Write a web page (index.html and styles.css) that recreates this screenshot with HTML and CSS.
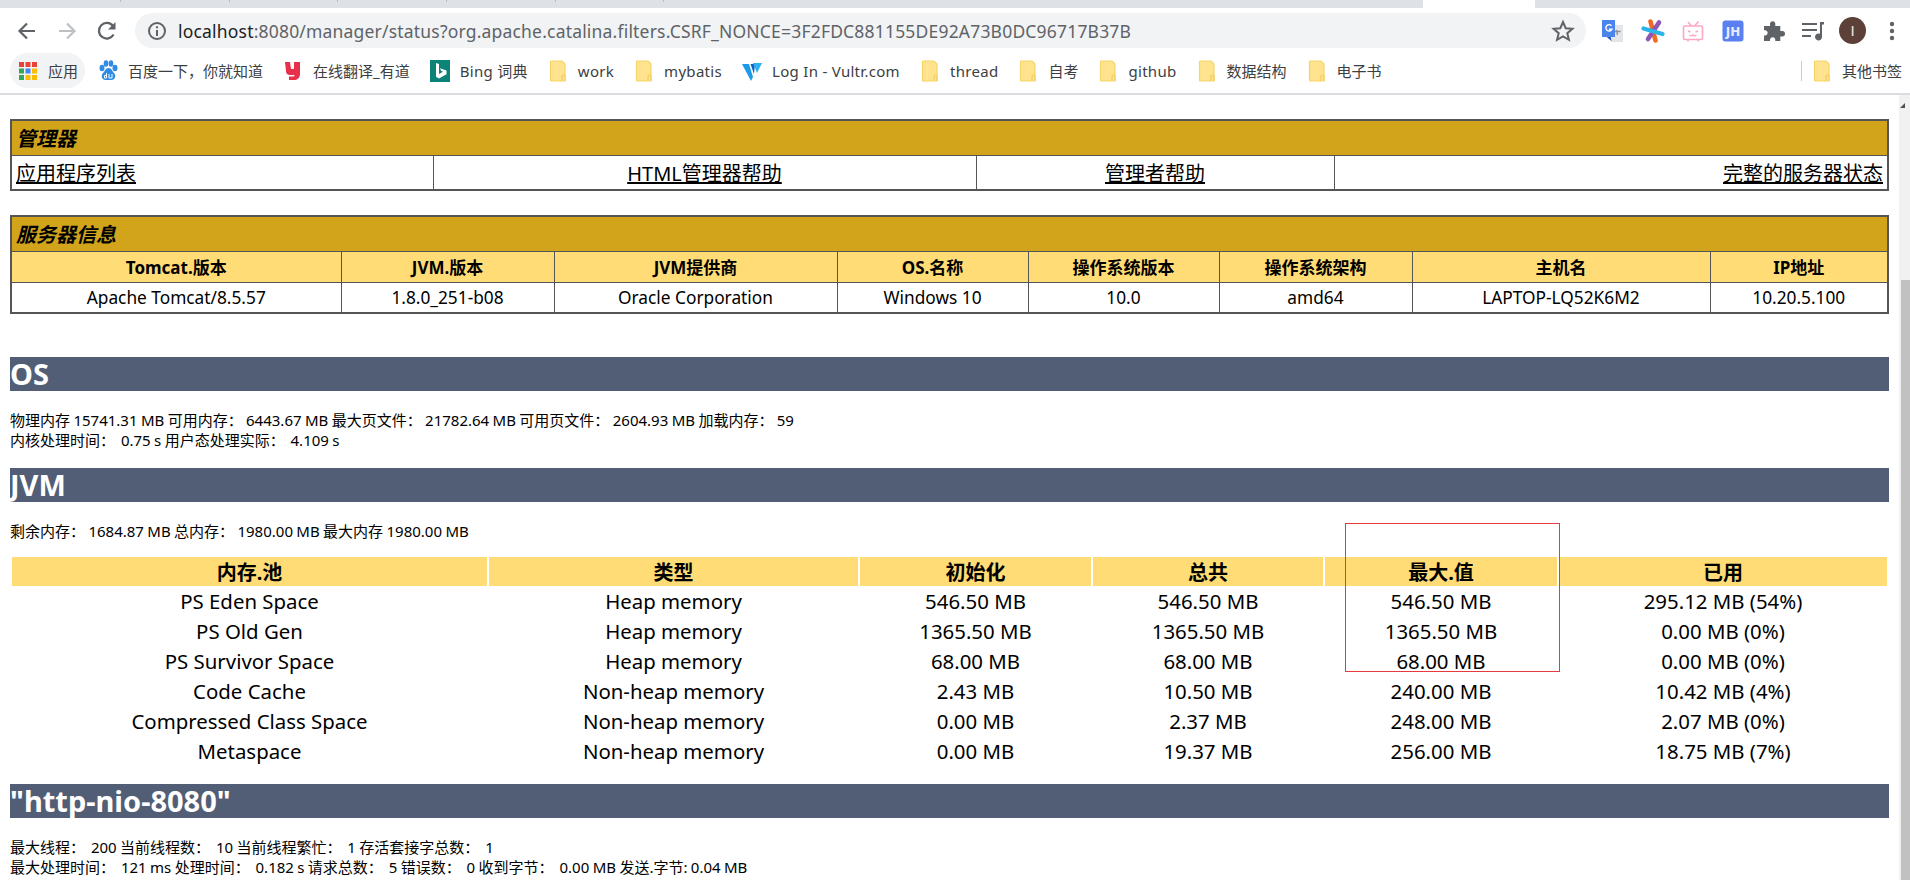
FILE: index.html
```html
<!DOCTYPE html>
<html lang="zh">
<head>
<meta charset="utf-8">
<title>/manager</title>
<link rel="stylesheet" href="styles.css">
</head>
<body>
<svg class="defs" width="0" height="0" aria-hidden="true">
  <symbol id="folder" viewBox="0 0 16 22">
    <path d="M1.500 1h10.500l3 3v17h-13.500a1 1 0 0 1-1-1v-18a1 1 0 0 1 1-1z" fill="#ffe38f" stroke="#f6d566" stroke-width="1.200"/>
    <path d="M12 21v-4.500a1.500 1.500 0 0 1 3 0v4.500" fill="#ffe38f" stroke="#f2cd5a" stroke-width="1.200"/>
  </symbol>
</svg>
<div class="tabstrip">
  <i class="tick t1"></i><i class="tick t2"></i><i class="tick t3"></i><i class="tick t4"></i><i class="tick t5"></i><i class="tick t6"></i>
  <div class="tab-active"></div>
</div>
<div class="toolbar">
  <svg class="tb" viewBox="0 0 24 24"><path d="M20 12H5M12 4.500 4.500 12l7.500 7.500" fill="none" stroke="#5f6368" stroke-width="2.200"/></svg>
  <svg class="tb" viewBox="0 0 24 24"><path d="M4 12h15M12 4.500l7.500 7.500-7.500 7.500" fill="none" stroke="#bdc1c6" stroke-width="2.200"/></svg>
  <svg class="tb" viewBox="0 0 24 24"><path d="M18.600 15.500a7.800 7.800 0 1 1-.6-8.500" fill="none" stroke="#5f6368" stroke-width="2.200"/><path d="M20.500 3v7.500H13z" fill="#5f6368"/></svg>
  <div class="omnibox">
    <svg class="info" viewBox="0 0 20 20"><circle cx="10" cy="10" r="8" fill="none" stroke="#5f6368" stroke-width="2"/><path d="M9 9h2v6H9zM9 5.200h2v2H9z" fill="#5f6368"/></svg>
    <span class="url"><span class="host">localhost</span>:8080/manager/status?org.apache.catalina.filters.CSRF_NONCE=3F2FDC881155DE92A73B0DC96717B37B</span>
    <svg class="star" viewBox="0 0 24 24"><path d="M12 3l2.700 6.200 6.700.6-5.100 4.400 1.600 6.600L12 17.300l-5.900 3.500 1.600-6.600-5.100-4.400 6.700-.6z" fill="none" stroke="#5f6368" stroke-width="2"/></svg>
  </div>
  <div class="exts">
    <svg class="tb" viewBox="0 0 24 24"><rect x="10" y="6" width="12" height="17" fill="#e3e5e7"/><path d="M15.500 11l1 5m-4-3.500h7" stroke="#8a8f94" stroke-width="1.300" fill="none"/><path d="M1 1h13v17H9.500l1 4-5-4H1z" fill="#4a85ec"/><path d="M9.500 18l1 4-4-4z" fill="#2c51b5"/><path d="M10.500 6.700A3.200 3.200 0 1 0 11 10.300H8" fill="none" stroke="#fff" stroke-width="1.400"/></svg>
    <svg class="tb" viewBox="0 0 24 24"><path d="M9.500 2.500 14.500 21.500" stroke="#f26a21" stroke-width="4.600" stroke-linecap="round"/><path d="M18 3.500 7 20" stroke="#8f56b5" stroke-width="4.600" stroke-linecap="round"/><path d="M2.500 9.500 21.500 15" stroke="#2ab4e8" stroke-width="4.200" stroke-linecap="round"/></svg>
    <svg class="tb" viewBox="0 0 24 24" fill="none" stroke="#fca8c4" stroke-width="1.600"><rect x="2.500" y="7" width="19" height="13.500" rx="1.500"/><path d="M10.500 7 7 3M13.500 7 17.500 2.500M7 20.500v2M17 20.500v2M7 12l2.500 1M17 12l-2.500 1M8.500 16c1.500 1.200 2.500 1 3.500 0 1 1 2 1.200 3.500 0"/></svg>
    <svg class="tb" viewBox="0 0 24 24"><rect x="1.500" y="1.500" width="21" height="21" rx="3" fill="#5b7ef0"/><text x="12" y="17" class="jh">JH</text></svg>
    <svg class="tb" viewBox="0 0 24 24"><path d="M9 4.500a2.700 2.700 0 0 1 5.300 0V7h5v5h2a2.700 2.700 0 0 1 0 5.400h-2V22h-5v-1.500a2.700 2.700 0 0 0-5.300 0V22H3v-5.500h1.500a2.700 2.700 0 0 0 0-5.300H3V7h6z" fill="#5f6368"/></svg>
    <svg class="tb" viewBox="0 0 24 24"><path d="M1 5h15M1 11h15M1 17h9" stroke="#5f6368" stroke-width="2" fill="none"/><path d="M19 3h4v2.500h-2V18a3.500 3.500 0 1 1-2-3.200z" fill="#5f6368"/></svg>
    <div class="avatar">I</div>
    <svg class="tb" viewBox="0 0 24 24"><circle cx="12" cy="5" r="2.200" fill="#5f6368"/><circle cx="12" cy="12" r="2.200" fill="#5f6368"/><circle cx="12" cy="19" r="2.200" fill="#5f6368"/></svg>
  </div>
</div>
<div class="bookmarks">
  <div class="bm chip">
    <svg class="ic" viewBox="0 0 20 20">
      <rect x="1" y="1" width="5" height="5" fill="#ea4335"/><rect x="7.500" y="1" width="5" height="5" fill="#ea4335"/><rect x="14" y="1" width="5" height="5" fill="#ea4335"/>
      <rect x="1" y="7.500" width="5" height="5" fill="#34a853"/><rect x="7.500" y="7.500" width="5" height="5" fill="#4285f4"/><rect x="14" y="7.500" width="5" height="5" fill="#fbbc05"/>
      <rect x="1" y="14" width="5" height="5" fill="#34a853"/><rect x="7.500" y="14" width="5" height="5" fill="#fbbc05"/><rect x="14" y="14" width="5" height="5" fill="#fbbc05"/>
    </svg>
    <span>应用</span>
  </div>
  <div class="bm">
    <svg class="ic" viewBox="0 0 20 22"><g fill="#2f8be6"><ellipse cx="4" cy="8" rx="2.500" ry="3.300"/><ellipse cx="8" cy="3.500" rx="2.300" ry="3.200"/><ellipse cx="13" cy="3.500" rx="2.300" ry="3.200"/><ellipse cx="17" cy="8" rx="2.500" ry="3.300"/><path d="M10.500 8c3 0 3.500 3 5.500 5 2.500 2.500 1 7-2.500 7h-6c-3.500 0-5-4.500-2.500-7 2-2 2.500-5 5.500-5z"/></g><path d="M8.500 13v5M8.500 15.500H6.500v2.500h2M11 14v4h3v-4" fill="none" stroke="#fff" stroke-width="1"/></svg>
    <span>百度一下，你就知道</span>
  </div>
  <div class="bm">
    <svg class="ic" viewBox="0 0 20 22"><path d="M2 2h5l1 7h3V2h6v12c0 4-3 6-6 6H6v-3.500h4c1 0 1.500-.5 1.500-1.500H7c-2.500 0-4-1.500-4-4z" fill="#e8304a"/></svg>
    <span>在线翻译_有道</span>
  </div>
  <div class="bm latin">
    <svg class="ic" viewBox="0 0 20 22"><rect width="20" height="22" fill="#0b8377"/><path d="M6 3l3 1v10l4-2.200-2-1-1-2.500 6.500 2.300v3.600L9 18.500l-3-1.800z" fill="#fff"/></svg>
    <span>Bing 词典</span>
  </div>
  <div class="bm latin"><svg class="ic"><use href="#folder"/></svg><span>work</span></div>
  <div class="bm latin"><svg class="ic"><use href="#folder"/></svg><span>mybatis</span></div>
  <div class="bm latin">
    <svg class="ic" viewBox="0 0 20 22"><path d="M0 4h7l4 13-2 4z" fill="#1e9be8"/><path d="M12 14 8.500 4H13z" fill="#0a62c4"/><path d="M11 3h9l-5 10z" fill="#2fb0f0"/></svg>
    <span>Log In - Vultr.com</span>
  </div>
  <div class="bm latin"><svg class="ic"><use href="#folder"/></svg><span>thread</span></div>
  <div class="bm"><svg class="ic"><use href="#folder"/></svg><span>自考</span></div>
  <div class="bm latin"><svg class="ic"><use href="#folder"/></svg><span>github</span></div>
  <div class="bm"><svg class="ic"><use href="#folder"/></svg><span>数据结构</span></div>
  <div class="bm"><svg class="ic"><use href="#folder"/></svg><span>电子书</span></div>
  <div class="bm other"><svg class="ic"><use href="#folder"/></svg><span>其他书签</span></div>
</div>
<div class="viewport">
  <main class="page">
    <table class="box nav">
      <colgroup><col class="n1"><col class="n2"><col class="n3"><col></colgroup>
      <tr class="title"><td colspan="4">管理器</td></tr>
      <tr class="links">
        <td class="left"><a href="#">应用程序列表</a></td>
        <td><a href="#">HTML管理器帮助</a></td>
        <td><a href="#">管理者帮助</a></td>
        <td class="right"><a href="#">完整的服务器状态</a></td>
      </tr>
    </table>
    <table class="box info-table">
      <colgroup><col class="i1"><col class="i2"><col class="i3"><col class="i4"><col class="i5"><col class="i6"><col class="i7"><col></colgroup>
      <tr class="title"><td colspan="8">服务器信息</td></tr>
      <tr class="head"><th>Tomcat.版本</th><th>JVM.版本</th><th>JVM提供商</th><th>OS.名称</th><th>操作系统版本</th><th>操作系统架构</th><th>主机名</th><th>IP地址</th></tr>
      <tr class="vals"><td>Apache Tomcat/8.5.57</td><td>1.8.0_251-b08</td><td>Oracle Corporation</td><td>Windows 10</td><td>10.0</td><td>amd64</td><td>LAPTOP-LQ52K6M2</td><td>10.20.5.100</td></tr>
    </table>
    <h1 class="sec sec-os">OS</h1>
    <p class="stats">物理内存 15741.31 MB 可用内存：&nbsp;6443.67 MB 最大页文件：&nbsp;21782.64 MB 可用页文件：&nbsp;2604.93 MB 加载内存：&nbsp;59<br>内核处理时间：&nbsp;&#8201;0.75 s 用户态处理实际：&nbsp;&#8201;4.109 s</p>
    <h1 class="sec">JVM</h1>
    <p class="stats">剩余内存：&nbsp;1684.87 MB 总内存：&nbsp;1980.00 MB 最大内存 1980.00 MB</p>
    <table class="mem">
      <colgroup><col class="m1"><col class="m2"><col class="m3"><col class="m4"><col class="m5"><col class="m6"></colgroup>
      <tr><th>内存.池</th><th>类型</th><th>初始化</th><th>总共</th><th>最大.值</th><th>已用</th></tr>
      <tr><td>PS Eden Space</td><td>Heap memory</td><td>546.50 MB</td><td>546.50 MB</td><td>546.50 MB</td><td>295.12 MB (54%)</td></tr>
      <tr><td>PS Old Gen</td><td>Heap memory</td><td>1365.50 MB</td><td>1365.50 MB</td><td>1365.50 MB</td><td>0.00 MB (0%)</td></tr>
      <tr><td>PS Survivor Space</td><td>Heap memory</td><td>68.00 MB</td><td>68.00 MB</td><td>68.00 MB</td><td>0.00 MB (0%)</td></tr>
      <tr><td>Code Cache</td><td>Non-heap memory</td><td>2.43 MB</td><td>10.50 MB</td><td>240.00 MB</td><td>10.42 MB (4%)</td></tr>
      <tr><td>Compressed Class Space</td><td>Non-heap memory</td><td>0.00 MB</td><td>2.37 MB</td><td>248.00 MB</td><td>2.07 MB (0%)</td></tr>
      <tr><td>Metaspace</td><td>Non-heap memory</td><td>0.00 MB</td><td>19.37 MB</td><td>256.00 MB</td><td>18.75 MB (7%)</td></tr>
    </table>
    <h1 class="sec sec-http">"http-nio-8080"</h1>
    <p class="stats">最大线程：&nbsp;&#8201;200 当前线程数：&nbsp;&#8201;10 当前线程繁忙：&nbsp;&#8201;1 存活套接字总数：&nbsp;&#8201;1<br>最大处理时间：&nbsp;&#8201;121 ms 处理时间：&nbsp;&#8201;0.182 s 请求总数：&nbsp;&#8201;5 错误数：&nbsp;&#8201;0 收到字节：&nbsp;&#8201;0.00 MB 发送.字节: 0.04 MB</p>
    <div class="redbox"></div>
  </main>
  <div class="scrollbar">
    <div class="arrow"></div>
    <div class="thumb"></div>
  </div>
</div>
</body>
</html>
```

FILE: styles.css
```css
* { box-sizing: border-box; }
html, body { margin: 0; height: 880px; overflow: hidden; background: #fff; }
body { font-family: "Noto Sans", "Noto Sans CJK SC", sans-serif; color: #000; display: flex; flex-direction: column; }
.defs { position: absolute; }

.tabstrip { height: 8px; background: #dee1e6; position: relative; flex: none; }
.tick { position: absolute; top: 0; width: 1px; height: 2px; background: #b8bcc2; }
.t1 { left: 120px; } .t2 { left: 229px; } .t3 { left: 337px; } .t4 { left: 446px; } .t5 { left: 555px; } .t6 { left: 663px; }
.tab-active { position: absolute; left: 1423px; width: 112px; top: 0; height: 8px; background: #fff; }

.toolbar { height: 45px; flex: none; display: flex; align-items: center; gap: 16px; padding: 0 6px 0 15px; background: #fff; }
.tb { width: 24px; height: 24px; flex: none; }
.omnibox { flex: 1; height: 35px; background: #f1f3f4; border-radius: 18px; display: flex; align-items: center; padding: 0 11px 0 12px; }
.info { width: 20px; height: 20px; flex: none; }
.url { margin-left: 11px; font-size: 17.500px; color: #5f6368; white-space: nowrap; flex: 1; letter-spacing: .19px; }
.host { color: #202124; }
.star { width: 24px; height: 24px; flex: none; }
.exts { display: flex; align-items: center; gap: 16px; margin-left: -1px; }
.avatar { width: 27px; height: 27px; margin: 0 -2px; flex: none; border-radius: 50%; background: #5d4037; color: #f4e9e4; font-family: "Liberation Sans", sans-serif; font-size: 15px; display: flex; align-items: center; justify-content: center; }
.jh { font-family: "DejaVu Sans", sans-serif; font-size: 12px; font-weight: 700; fill: #e6ecff; text-anchor: middle; }

.bookmarks { height: 42px; flex: none; display: flex; align-items: center; gap: 20px; padding: 0 8px 5px 10px; background: #fff; border-bottom: 2px solid #dadce0; font-size: 15px; color: #3c4043; white-space: nowrap; }
.bm { display: flex; align-items: center; gap: 10px; }
.bm .ic { width: 20px; height: 22px; flex: none; }
.latin span { letter-spacing: .3px; }
.chip { height: 35px; width: 75px; border-radius: 18px; background: #f1f3f4; padding-left: 8px; margin-right: -7px; }
.other { margin-left: auto; position: relative; }
.other::before { content: ""; position: absolute; left: -11px; top: 1px; bottom: 1px; width: 1px; background: #c8cacd; }

.viewport { flex: 1; min-height: 0; display: flex; overflow: hidden; }
.page { flex: 1; min-width: 0; padding: 24px 10px 0; position: relative; }

.box { width: 1879px; border-collapse: collapse; table-layout: fixed; border: 2px solid #555; }
.box td, .box th { border: 1px solid #555; padding: 0 4px; font-size: 17.300px; font-weight: 400; text-align: center; white-space: nowrap; }
.box .title td { height: 35px; background: #d2a41c; text-align: left; font-size: 20px; font-weight: 700; font-style: italic; padding: 0 4px; }
.box .links td { height: 35px; font-size: 20px; }
.links a { color: #000; text-decoration: underline; }
.box .links .left { text-align: left; }
.box .links .right { text-align: right; }
.n1 { width: 422px; }
.n2 { width: 543px; }
.n3 { width: 358px; }
.info-table { margin-top: 24px; }
.box .head th { height: 31px; background: #ffdc75; font-weight: 700; font-size: 17px; }
.box .vals td { height: 31px; }
.i1 { width: 330px; }
.i2 { width: 213px; }
.i3 { width: 283px; }
.i4 { width: 191px; }
.i5 { width: 191px; }
.i6 { width: 193px; }
.i7 { width: 298px; }

.sec { margin: 18px 0 0; height: 34px; background: #525d76; color: #fff; font-size: 29px; line-height: 34px; font-weight: 700; }
.sec-os { margin-top: 43px; }
.stats { margin: 19px 0 0; font-size: 15px; line-height: 20px; white-space: nowrap; word-spacing: -.5px; }

.mem { width: 1879px; margin-top: 16px; border-collapse: separate; border-spacing: 2px 0; table-layout: fixed; font-size: 20.400px; }
.mem th { height: 28px; padding: 0; background: #ffdc75; font-weight: 700; font-size: 20px; text-align: center; }
.mem td { height: 30px; padding: 0; text-align: center; white-space: nowrap; }
.m1 { width: 475px; }
.m2 { width: 369px; }
.m3 { width: 231px; }
.m4 { width: 230px; }
.m5 { width: 232px; }
.m6 { width: 328px; }

.redbox { position: absolute; left: 1345px; top: 428px; width: 215px; height: 149px; border: 1px solid #e8393f; }

.scrollbar { width: 11px; flex: none; background: #f1f1f1; position: relative; }
.arrow { position: absolute; left: 1px; top: 8px; width: 0; height: 0; border-left: 5px solid transparent; border-bottom: 5px solid #505050; }
.thumb { position: absolute; right: 0; top: 185px; bottom: 0; width: 9px; background: #c1c1c1; }
```
